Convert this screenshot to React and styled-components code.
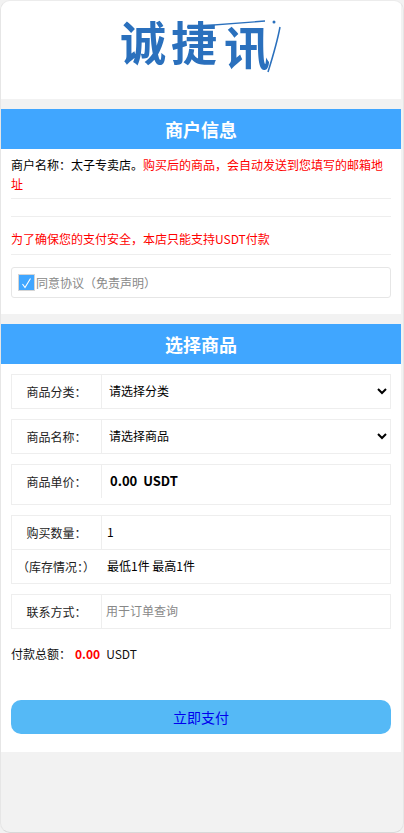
import React from 'react';
import styled, { createGlobalStyle } from 'styled-components';

const Global = createGlobalStyle`
  html, body { margin: 0; padding: 0; background: #f2f2f2; }
  body { font-family: "Noto Sans CJK SC", "Liberation Sans", sans-serif; }
  * { box-sizing: border-box; }
`;

const Frame = styled.div`
  width: 404px;
  height: 833px;
  overflow: hidden;
  padding-right: 2px;
  background: #f2f2f2;
  border: 1px solid #e6e6e6;
  border-top-color: #ececec;
  border-bottom-color: #d8d8d8;
  border-radius: 10px;
`;

const LogoBar = styled.header`
  height: 98px;
  background: #fff;
  display: flex;
  justify-content: center;
  padding-top: 12px;
`;

const Logo = styled.div`
  position: relative;
  width: 162px;
  height: 62px;
  filter: blur(0.4px);
`;

const LogoText = styled.div`
  display: flex;
  font-weight: 700;
  font-size: 46px;
  line-height: 54px;
  color: #2a70bd;
  white-space: nowrap;
`;

const LogoChar = styled.span`
  display: block;
  width: ${p => p.$w}px;
  transform: translateY(${p => p.$dy || 0}px);
`;

const LogoSwoosh = styled.svg`
  position: absolute;
  left: 0;
  top: 0;
`;

const Section = styled.section`
  margin-top: 10px;
  background: #fff;
`;

const Title = styled.h2`
  margin: 0;
  height: 40px;
  line-height: 40px;
  background: #40a6ff;
  color: #fff;
  font-size: 18px;
  font-weight: 700;
  text-align: center;
`;

const Body = styled.div`
  padding: 0 10px;
`;

const Info = styled.div`
  font-size: 12px;
  line-height: 19px;
  color: ${p => (p.$red ? '#f00' : '#000')};
  border-bottom: 1px solid #eee;
  min-height: ${p => p.$h || 0}px;
  padding: ${p => p.$pt || 0}px 0 ${p => p.$pb || 0}px;
`;

const Red = styled.span`
  color: #f00;
`;

const Agree = styled.label`
  display: flex;
  align-items: center;
  height: 31px;
  margin-top: 12px;
  padding-left: 6px;
  border: 1px solid #e6e6e6;
  border-radius: 3px;
  font-size: 12px;
  color: #888;
`;

const Tick = styled.span`
  width: 17px;
  height: 17px;
  background: #40a6ff;
  border: 1px solid #d5d5d5;
  display: flex;
  align-items: center;
  justify-content: center;
  margin-right: 1px;
`;

const Spacer = styled.div`
  height: 16px;
`;

const Group = styled.div`
  border: 1px solid #eee;
  margin-top: 10px;
`;

const Row = styled.div`
  display: flex;
  height: ${p => p.$h || 33}px;
  & + & { border-top: 1px solid #eee; }
`;

const Label = styled.div`
  width: 90px;
  height: ${p => (p.$tall ? '33px' : 'auto')};
  flex: none;
  display: flex;
  align-items: center;
  justify-content: ${p => (p.$plain ? 'flex-start' : 'center')};
  padding-left: ${p => (p.$plain ? '5px' : '0')};
  font-size: 12px;
  color: #222;
  white-space: nowrap;
  border-right: ${p => (p.$plain ? '0' : '1px solid #eee')};
`;

const Select = styled.select`
  flex: 1;
  min-width: 0;
  height: 100%;
  border: 0;
  background: #fff;
  font: inherit;
  font-size: 12px;
  color: #000;
  padding: 0 3px 2px;
  outline: none;
`;

const Value = styled.div`
  display: flex;
  align-items: center;
  padding: 0 0 2px ${p => p.$pl || 5}px;
  font-size: ${p => p.$size || 12}px;
  font-weight: ${p => p.$weight || 400};
  color: #000;
  height: ${p => (p.$fixed ? p.$fixed + 'px' : 'auto')};
  white-space: pre;
`;

const Input = styled.input`
  flex: 1;
  min-width: 0;
  border: 0;
  outline: none;
  font: inherit;
  font-size: 12px;
  padding: 0 4px 2px;
  &::placeholder { color: #888; }
`;

const Total = styled.div`
  display: flex;
  align-items: center;
  height: 20px;
  margin-top: 14px;
  font-size: 12px;
  color: #111;
`;

const Amount = styled.strong`
  color: #f00;
  margin: 0 6px 0 4px;
  font-size: 12px;
`;

const Pay = styled.a`
  display: block;
  margin-top: 37px;
  height: 34px;
  line-height: 34px;
  text-align: center;
  text-decoration: none;
  border-radius: 10px;
  background: #55b9f6;
  color: #0000ee;
  font-size: 14px;
`;

const Bottom = styled.div`
  height: 18px;
`;

export default function App() {
  return (
    <Frame>
      <Global />
      <LogoBar>
        <Logo>
          <LogoText>
            <LogoChar $w={51}>诚</LogoChar>
            <LogoChar $w={53}>捷</LogoChar>
            <LogoChar $w={50} $dy={5}>讯</LogoChar>
          </LogoText>
          <LogoSwoosh width="166" height="66" viewBox="0 0 166 66" fill="none">
            <path d="M67 14 L145 8" stroke="#2a70bd" strokeWidth="1.3" />
            <path d="M160 14 C158 25 153 43 148 59" stroke="#2a70bd" strokeWidth="1.5" />
            <circle cx="154" cy="9" r="1.5" fill="#2a70bd" />
          </LogoSwoosh>
        </Logo>
      </LogoBar>

      <Section>
        <Title>商户信息</Title>
        <Body>
          <Info $pt={6} $pb={5}>商户名称：太子专卖店。<Red>购买后的商品，会自动发送到您填写的邮箱地址</Red></Info>
          <Info $h={18} />
          <Info $red $pt={12} $pb={6}>为了确保您的支付安全，本店只能支持USDT付款</Info>
          <Agree>
            <Tick>
              <svg width="11" height="12" viewBox="0 0 11 12" fill="none">
                <path d="M1.5 7 L4 10.5 L9.5 1.5" stroke="#fff" strokeWidth="1.1" />
              </svg>
            </Tick>
            同意协议（免责声明）
          </Agree>
          <Spacer />
        </Body>
      </Section>

      <Section>
        <Title>选择商品</Title>
        <Body>
          <Group>
            <Row>
              <Label>商品分类：</Label>
              <Select defaultValue=""><option value="">请选择分类</option></Select>
            </Row>
          </Group>
          <Group>
            <Row>
              <Label>商品名称：</Label>
              <Select defaultValue=""><option value="">请选择商品</option></Select>
            </Row>
          </Group>
          <Group>
            <Row $h={39}>
              <Label $tall>商品单价：</Label>
              <Value $pl={8} $size={13} $weight={700} $fixed={33}>0.00  USDT</Value>
            </Row>
          </Group>
          <Group>
            <Row>
              <Label>购买数量：</Label>
              <Value>1</Value>
            </Row>
            <Row $h={34}>
              <Label $plain>（库存情况：）</Label>
              <Value>最低1件 最高1件</Value>
            </Row>
          </Group>
          <Group>
            <Row>
              <Label>联系方式：</Label>
              <Input placeholder="用于订单查询" />
            </Row>
          </Group>
          <Total>付款总额：<Amount>0.00</Amount>USDT</Total>
          <Pay href="#">立即支付</Pay>
          <Bottom />
        </Body>
      </Section>
    </Frame>
  );
}
